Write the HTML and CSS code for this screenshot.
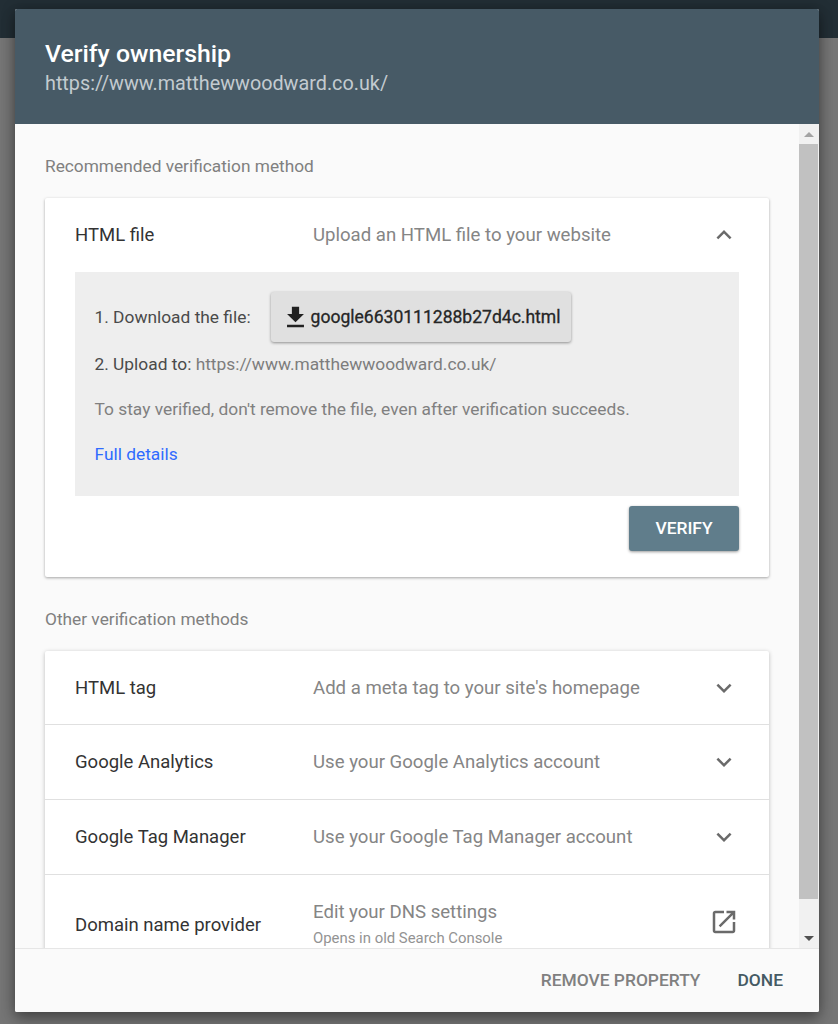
FILE: index.html
```html
<!DOCTYPE html>
<html lang="en">
<head>
    <meta charset="UTF-8">
    <meta name="viewport" content="width=device-width, initial-scale=1.0">
    <title>Verify ownership</title>
    <link rel="stylesheet" href="styles.css">
</head>
<body>
    <div class="top-bar"></div>

    <div class="dialog">
        <!-- header -->
        <div class="dialog-header">
            <div class="dialog-title">Verify ownership</div>
            <div class="dialog-url">https://www.matthewwoodward.co.uk/</div>
        </div>

        <!-- scrolling middle -->
        <div class="dialog-middle">
            <div class="dialog-body">
                <div class="section-label">Recommended verification method</div>
                <div class="card card-open">
                    <div class="method-row">
                        <div class="method-name">HTML file</div>
                        <div class="method-desc">Upload an HTML file to your website</div>
                        <svg class="row-icon" viewBox="0 0 24 24"><path d="M7.41 15.41L12 10.83l4.59 4.58L18 14l-6-6-6 6z"/></svg>
                    </div>
                    <div class="steps">
                        <div class="step-download">
                            <span>1. Download the file:</span>
                            <button class="file-btn">
                                <svg class="file-icon" viewBox="0 0 24 24"><path d="M19 9h-4V3H9v6H5l7 7 7-7zM5 18v2h14v-2H5z"/></svg>
                                google6630111288b27d4c.html
                            </button>
                        </div>
                        <div class="step-upload">2. Upload to: <span class="muted">https://www.matthewwoodward.co.uk/</span></div>
                        <div class="step-note">To stay verified, don't remove the file, even after verification succeeds.</div>
                        <a class="step-link" href="#">Full details</a>
                    </div>
                    <div class="card-actions">
                        <button class="verify-btn">VERIFY</button>
                    </div>
                </div>

                <div class="section-label section-other">Other verification methods</div>
                <div class="card">
                    <div class="method-row">
                        <div class="method-name">HTML tag</div>
                        <div class="method-desc">Add a meta tag to your site's homepage</div>
                        <svg class="row-icon" viewBox="0 0 24 24"><path d="M7.41 8.59L12 13.17l4.59-4.58L18 10l-6 6-6-6z"/></svg>
                    </div>
                    <div class="method-row">
                        <div class="method-name">Google Analytics</div>
                        <div class="method-desc">Use your Google Analytics account</div>
                        <svg class="row-icon" viewBox="0 0 24 24"><path d="M7.41 8.59L12 13.17l4.59-4.58L18 10l-6 6-6-6z"/></svg>
                    </div>
                    <div class="method-row">
                        <div class="method-name">Google Tag Manager</div>
                        <div class="method-desc">Use your Google Tag Manager account</div>
                        <svg class="row-icon" viewBox="0 0 24 24"><path d="M7.41 8.59L12 13.17l4.59-4.58L18 10l-6 6-6-6z"/></svg>
                    </div>
                    <div class="method-row method-row-tall">
                        <div class="method-name">Domain name provider</div>
                        <div class="method-desc">
                            Edit your DNS settings
                            <div class="method-sub">Opens in old Search Console</div>
                        </div>
                        <svg class="row-icon row-icon-up" viewBox="0 0 24 24"><path d="M19 19H5V5h7V3H5c-1.11 0-2 .9-2 2v14c0 1.1.89 2 2 2h14c1.1 0 2-.9 2-2v-7h-2v7zM14 3v2h3.59l-9.83 9.83 1.41 1.41L19 6.41V10h2V3h-7z"/></svg>
                    </div>
                </div>
            </div>

            <!-- scrollbar -->
            <div class="scrollbar">
                <div class="scroll-arrow"><div class="arrow-up"></div></div>
                <div class="scroll-thumb"></div>
                <div class="scroll-rest"></div>
                <div class="scroll-arrow"><div class="arrow-down"></div></div>
            </div>
        </div>

        <!-- footer -->
        <div class="dialog-footer">
            <button class="footer-btn">REMOVE PROPERTY</button>
            <button class="footer-btn footer-done">DONE</button>
        </div>
    </div>
</body>
</html>
```

FILE: styles.css
```css
* {
    margin: 0;
    padding: 0;
    box-sizing: border-box;
    font-family: Roboto, "Noto Sans", sans-serif;
}
body {
    width: 838px;
    height: 1024px;
    background: #757575;
    overflow: hidden;
    position: relative;
}
.top-bar {
    height: 38px;
    background: #222e35;
}
/* dialog */
.dialog {
    position: absolute;
    top: 9px;
    left: 15px;
    width: 804px;
    height: 1003px;
    display: flex;
    flex-direction: column;
    background: #fafafa;
    border-radius: 2px;
    overflow: hidden;
    box-shadow: 0 8px 14px rgba(0, 0, 0, 0.28), 0 0 14px rgba(0, 0, 0, 0.28);
}
.dialog-header {
    height: 115px;
    flex-shrink: 0;
    background: #475a66;
    padding: 30px 30px 0;
}
.dialog-title {
    font-size: 24.8px;
    font-weight: 500;
    line-height: 30px;
    color: #fff;
}
.dialog-url {
    font-size: 19.8px;
    line-height: 29px;
    color: #c3cbd0;
}
.dialog-middle {
    flex: 1;
    min-height: 0;
    display: flex;
}
.dialog-body {
    flex: 1;
    min-width: 0;
    overflow: hidden;
    padding: 30px 30px 0;
}
.section-label {
    font-size: 17.3px;
    line-height: 24px;
    color: #808080;
    margin-bottom: 20px;
}
.section-other {
    margin-top: 30px;
}
/* cards */
.card {
    background: #fff;
    border-radius: 2px;
    box-shadow: 0 1px 4px rgba(0, 0, 0, 0.25);
}
.card-open {
    height: 379px;
    box-shadow: 0 1px 3px rgba(0, 0, 0, 0.35);
}
.method-row {
    height: 75px;
    display: flex;
    align-items: center;
    padding: 0 30px;
    border-bottom: 1px solid #e0e0e0;
}
.method-row:first-child {
    height: 74px;
}
.card-open .method-row {
    border-bottom: 0;
}
.method-row-tall {
    height: 99px;
    border-bottom: 0;
}
.method-name {
    width: 238px;
    font-size: 18.5px;
    color: #333333;
}
.method-desc {
    flex: 1;
    font-size: 18.6px;
    color: #858585;
}
.method-sub {
    font-size: 14.9px;
    line-height: 20px;
    margin-top: 5px;
    color: #939393;
}
.row-icon {
    width: 30px;
    height: 30px;
    fill: #6a6a6a;
}
.row-icon-up {
    margin-bottom: 6px;
}
/* steps box */
.steps {
    margin: 0 30px;
    height: 224px;
    background: #eeeeee;
    padding: 20px 20px 20px 19.5px;
    font-size: 17.35px;
    color: #4a4a4a;
}
.step-download {
    display: flex;
    align-items: center;
    gap: 20px;
}
.file-btn {
    height: 50px;
    width: 300px;
    padding: 0 0 0 10px;
    display: flex;
    align-items: center;
    gap: 1px;
    border: 0;
    border-radius: 3px;
    background: #e0e0e0;
    font-size: 17.55px;
    font-weight: 400;
    -webkit-text-stroke: 0.3px #262626;
    color: #262626;
    box-shadow: 0 1px 3px rgba(0, 0, 0, 0.4);
}
.file-icon {
    width: 29px;
    height: 29px;
    fill: #212121;
}
.step-upload {
    margin-top: 10px;
    line-height: 24px;
}
.muted {
    color: #7d7d7d;
}
.step-note {
    margin-top: 21px;
    line-height: 24px;
    color: #808080;
}
.step-link {
    display: block;
    margin-top: 21px;
    line-height: 24px;
    color: #2f6bff;
    text-decoration: none;
}
.card-actions {
    display: flex;
    justify-content: flex-end;
    padding: 10px 30px 0;
}
.verify-btn {
    width: 110px;
    height: 45px;
    border: 0;
    border-radius: 3px;
    padding-bottom: 2px;
    background: #607d8b;
    color: #fff;
    font-size: 17.4px;
    font-weight: 500;
    box-shadow: 0 1px 3px rgba(0, 0, 0, 0.4);
}
/* scrollbar */
.scrollbar {
    width: 20px;
    flex-shrink: 0;
    display: flex;
    flex-direction: column;
    background: #f1f1f1;
    padding-right: 1px;
}
.scroll-arrow {
    height: 20px;
    display: flex;
    align-items: center;
    justify-content: center;
}
.arrow-up {
    border: 5px solid transparent;
    border-top: 0;
    border-bottom-color: #a3a3a3;
}
.arrow-down {
    border: 5px solid transparent;
    border-bottom: 0;
    border-top-color: #505050;
}
.scroll-thumb {
    height: 755px;
    background: #c1c1c1;
}
.scroll-rest {
    flex: 1;
}
/* footer */
.dialog-footer {
    height: 64px;
    flex-shrink: 0;
    display: flex;
    justify-content: flex-end;
    align-items: center;
    gap: 37px;
    padding: 0 36px 2px 0;
    background: #fafafa;
    border-top: 1px solid #e6e6e6;
}
.footer-btn {
    border: 0;
    background: transparent;
    font-size: 17.4px;
    font-weight: 500;
    color: #808080;
}
.footer-done {
    color: #455a64;
}
```
